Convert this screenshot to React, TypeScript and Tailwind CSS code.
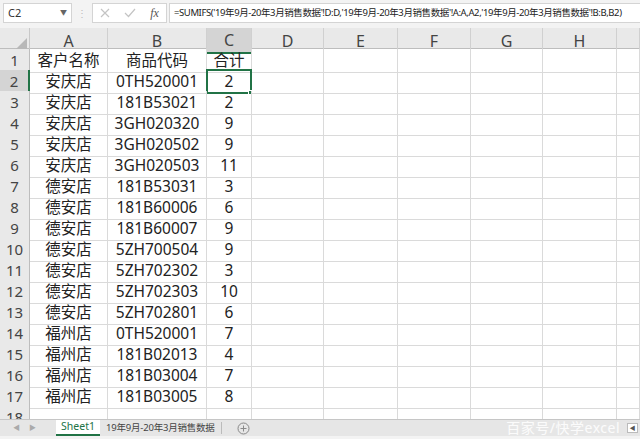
import React from "react";

const rows: [string, string, string][] = [
  ["客户名称", "商品代码", "合计"],
  ["安庆店", "0TH520001", "2"],
  ["安庆店", "181B53021", "2"],
  ["安庆店", "3GH020320", "9"],
  ["安庆店", "3GH020502", "9"],
  ["安庆店", "3GH020503", "11"],
  ["德安店", "181B53031", "3"],
  ["德安店", "181B60006", "6"],
  ["德安店", "181B60007", "9"],
  ["德安店", "5ZH700504", "9"],
  ["德安店", "5ZH702302", "3"],
  ["德安店", "5ZH702303", "10"],
  ["德安店", "5ZH702801", "6"],
  ["福州店", "0TH520001", "7"],
  ["福州店", "181B02013", "4"],
  ["福州店", "181B03004", "7"],
  ["福州店", "181B03005", "8"],
  ["", "", ""],
];

const cols = ["A", "B", "C", "D", "E", "F", "G", "H", ""];
const gridCols = "grid grid-cols-[30px_78px_99px_45px_72px_74px_73px_72px_74px_1fr]";

const App = () => {
  return (
    <div className="w-[640px] h-[439px] overflow-hidden bg-white flex flex-col font-['Noto_Sans','Noto_Sans_CJK_SC',sans-serif] text-[#222]">
      {/* 编辑栏 */}
      <div className="h-[28px] bg-[#f3f3f3] flex items-start pt-[3px] pl-[3px] shrink-0">
        <div className="w-[69px] h-[20px] bg-white border border-[#d4d4d4] flex items-center justify-between px-[4px] text-[11px] text-[#333]">
          <span>C2</span>
          <span className="text-[7px] text-[#666]">▼</span>
        </div>
        <div className="w-[20px] h-[20px] flex items-center justify-center text-[10px] text-[#bbb] leading-none">⋮</div>
        <div className="w-[75px] h-[20px] bg-white border border-[#d4d4d4] flex items-center justify-around">
          <svg width="10" height="10" viewBox="0 0 10 10"><path d="M1 1 L9 9 M9 1 L1 9" stroke="#c4c4c4" strokeWidth="1.2" /></svg>
          <svg width="12" height="10" viewBox="0 0 12 10"><path d="M1 5 L4.5 8.5 L11 1" stroke="#c4c4c4" strokeWidth="1.2" fill="none" /></svg>
          <span className="font-['Liberation_Serif',serif] italic text-[12px] text-[#555]">fx</span>
        </div>
        <div className="flex-1 h-[20px] ml-[2px] bg-white border border-[#d4d4d4] border-r-0 flex items-center pl-[4px] text-[9.5px] tracking-[-0.4px] whitespace-nowrap overflow-hidden text-[#222]">
          =SUMIFS('19年9月-20年3月销售数据'!D:D,'19年9月-20年3月销售数据'!A:A,A2,'19年9月-20年3月销售数据'!B:B,B2)
        </div>
      </div>

      {/* 表格 */}
      <div className="h-[391px] overflow-hidden shrink-0">
        <div className={`${gridCols} h-[21px] bg-[#e9e9e9] border-b border-[#bdbdbd]`}>
          <div className="border-r border-[#c8c8c8] flex items-end justify-end p-[2px]">
            <div className="w-0 h-0 border-l-[14px] border-l-transparent border-b-[14px] border-b-[#b8b8b8]" />
          </div>
          {cols.map((c, i) => (
            <div
              key={i}
              className={`border-r border-[#d0d0d0] flex items-center justify-center text-[16px] text-[#444] ${
                c === "C" ? "bg-[#d4d4d4] border-b-2 border-b-[#217346]" : ""
              }`}
            >
              {c}
            </div>
          ))}
        </div>
        {rows.map((r, i) => {
          const n = i + 1;
          return (
            <div key={n} className={`${gridCols} h-[21px]`}>
              <div
                className={`flex items-center justify-center text-[15px] text-[#444] border-b border-[#d0d0d0] ${
                  n === 2 ? "bg-[#d4d4d4] border-r-2 border-r-[#217346]" : "bg-[#e9e9e9] border-r border-r-[#bdbdbd]"
                }`}
              >
                {n}
              </div>
              {cols.map((_, j) => {
                const v = j < 3 ? r[j] : "";
                const sel = n === 2 && j === 2;
                return (
                  <div
                    key={j}
                    className={`relative flex items-center justify-center text-[15.5px] leading-none whitespace-nowrap ${
                      sel ? "border-2 border-[#217346] -ml-px -mt-px" : "border-r border-b border-[#dadada]"
                    }`}
                  >
                    {v}
                    {sel && <div className="absolute -right-[3px] -bottom-[3px] w-[5px] h-[5px] bg-[#217346] border border-white" />}
                  </div>
                );
              })}
            </div>
          );
        })}
      </div>

      {/* 工作表标签 */}
      <div className="relative h-[17px] bg-[#e6e6e6] border-t border-[#c6c6c6] flex items-stretch shrink-0">
        <div className="w-[56px] flex items-center gap-[9px] pl-[13px] text-[7px] text-[#aaa]">
          <span>◀</span>
          <span>▶</span>
        </div>
        <div className="w-[44px] bg-white border-b-2 border-[#217346] flex items-center justify-center text-[10.5px] text-[#217346]">
          Sheet1
        </div>
        <div className="w-[122px] pl-[6px] flex items-center text-[9.5px] tracking-[-0.2px] whitespace-nowrap text-[#444] border-r border-[#bbb] my-[2px]">
          19年9月-20年3月销售数据
        </div>
        <div className="ml-[15px] flex items-center">
          <svg width="13" height="13" viewBox="0 0 13 13">
            <circle cx="6.5" cy="6.5" r="5.5" fill="none" stroke="#888" strokeWidth="1" />
            <path d="M6.5 3.5 V9.5 M3.5 6.5 H9.5" stroke="#888" strokeWidth="1" />
          </svg>
        </div>
        <div className="absolute right-[20px] top-[-3px] text-[14px] text-white/85 tracking-[0.5px] whitespace-nowrap">百家号/快学excel</div>
        <div className="absolute right-[2px] top-[3px] w-[11px] h-[10px] bg-white border border-[#bbb] flex items-center justify-center text-[6px] text-[#555]">
          ◀
        </div>
      </div>
      <div className="flex-1 bg-[#f3f3f3]" />
    </div>
  );
};

export default App;
